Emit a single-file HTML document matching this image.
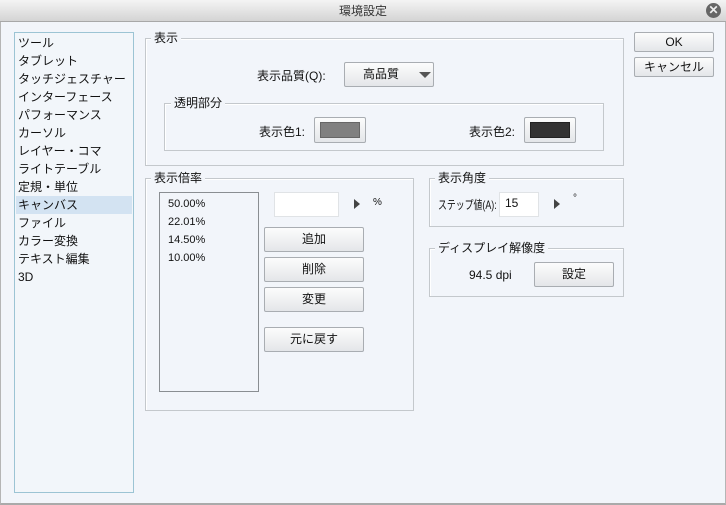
<!DOCTYPE html>
<html><head><meta charset="utf-8"><style>
*{box-sizing:border-box;margin:0;padding:0}
body{width:726px;height:505px;overflow:hidden;background:#f2f5fa;font-family:"Liberation Sans","Noto Sans CJK JP",sans-serif;font-size:12px;color:#111;position:relative}
.a{position:absolute}
.title{left:0;top:0;width:726px;height:22px;background:linear-gradient(#f4f4f4,#d4d4d4);border-bottom:1px solid #a8a8a8;text-align:center;line-height:22px;color:#333}
.close{left:706px;top:3px;width:15px;height:15px;border-radius:50%;background:#666;color:#eee;font-size:12px;line-height:15px;text-align:center;font-weight:bold}
.frame{left:0;top:22px;width:726px;height:483px;border:1px solid #b5b5b5;border-top:none;border-bottom:2px solid #aaa}
.list{left:14px;top:32px;width:120px;height:461px;border:1px solid #9cc4d4;background:#f2f6fa}
.list div{height:18px;line-height:18px;padding-left:3px;white-space:nowrap}
.list .sel{background:#d3e3f2;margin:0 1px;padding-left:2px}
.grp{border:1px solid #c4c8cc;box-shadow:inset 1px 1px 0 #fff}
.lg{background:#f2f5fa;padding:0 3px;line-height:14px}
.btn{border:1px solid #a9adb2;border-radius:2px;background:linear-gradient(#fcfcfc,#e4e6e9);text-align:center;line-height:22px}
.inp{background:#fff;border:1px solid #e0e3e6}
.tri{width:0;height:0;border-top:5px solid transparent;border-bottom:5px solid transparent;border-left:6px solid #444}
</style></head><body>
<div class="a title">環境設定</div>
<div class="a close">✕</div>
<div class="a frame"></div>
<div class="a list" style="padding-top:1px">
<div>ツール</div><div>タブレット</div><div>タッチジェスチャー</div><div>インターフェース</div><div>パフォーマンス</div><div>カーソル</div><div>レイヤー・コマ</div><div>ライトテーブル</div><div>定規・単位</div><div class="sel">キャンバス</div><div>ファイル</div><div>カラー変換</div><div>テキスト編集</div><div>3D</div>
</div>

<div class="a grp" style="left:145px;top:38px;width:479px;height:128px"></div>
<div class="a lg" style="left:151px;top:31px">表示</div>
<div class="a" style="left:257px;top:67px">表示品質(Q):</div>
<div class="a btn" style="left:344px;top:62px;width:90px;height:25px;text-align:left;padding-left:18px;line-height:23px">高品質</div>
<div class="a" style="left:419px;top:72px;width:0;height:0;border-left:6px solid transparent;border-right:6px solid transparent;border-top:6px solid #555"></div>
<div class="a grp" style="left:164px;top:103px;width:440px;height:48px"></div>
<div class="a lg" style="left:171px;top:96px">透明部分</div>
<div class="a" style="left:259px;top:123px">表示色1:</div>
<div class="a btn" style="left:314px;top:117px;width:52px;height:26px;padding:4px 5px"><div style="background:#808080;height:16px;border:1px solid #666"></div></div>
<div class="a" style="left:469px;top:123px">表示色2:</div>
<div class="a btn" style="left:524px;top:117px;width:52px;height:26px;padding:4px 5px"><div style="background:#333;height:16px;border:1px solid #222"></div></div>

<div class="a btn" style="left:634px;top:32px;width:80px;height:20px;line-height:18px">OK</div>
<div class="a btn" style="left:634px;top:57px;width:80px;height:20px;line-height:18px">キャンセル</div>

<div class="a grp" style="left:145px;top:178px;width:269px;height:233px"></div>
<div class="a lg" style="left:151px;top:171px">表示倍率</div>
<div class="a" style="left:159px;top:192px;width:100px;height:200px;border:1px solid #8a8e92;padding:2px 0 0 8px;line-height:18px;font-size:11px">50.00%<br>22.01%<br>14.50%<br>10.00%</div>
<div class="a inp" style="left:274px;top:192px;width:65px;height:25px"></div>
<div class="a tri" style="left:354px;top:199px"></div>
<div class="a" style="left:373px;top:197px;font-size:10px">%</div>
<div class="a btn" style="left:264px;top:227px;width:100px;height:25px">追加</div>
<div class="a btn" style="left:264px;top:257px;width:100px;height:25px">削除</div>
<div class="a btn" style="left:264px;top:287px;width:100px;height:25px">変更</div>
<div class="a btn" style="left:264px;top:327px;width:100px;height:25px">元に戻す</div>

<div class="a grp" style="left:429px;top:178px;width:195px;height:49px"></div>
<div class="a lg" style="left:435px;top:171px">表示角度</div>
<div class="a" style="left:438px;top:196px;font-size:12px;transform:scaleX(.74);transform-origin:0 0;white-space:nowrap">ステップ値(A):</div>
<div class="a inp" style="left:499px;top:192px;width:40px;height:25px;padding:3px 5px;z-index:1">15</div>
<div class="a tri" style="left:554px;top:199px"></div>
<div class="a" style="left:573px;top:193px;font-size:10px">°</div>

<div class="a grp" style="left:429px;top:248px;width:195px;height:49px"></div>
<div class="a lg" style="left:435px;top:241px">ディスプレイ解像度</div>
<div class="a" style="left:469px;top:268px">94.5 dpi</div>
<div class="a btn" style="left:534px;top:262px;width:80px;height:25px">設定</div>
</body></html>
